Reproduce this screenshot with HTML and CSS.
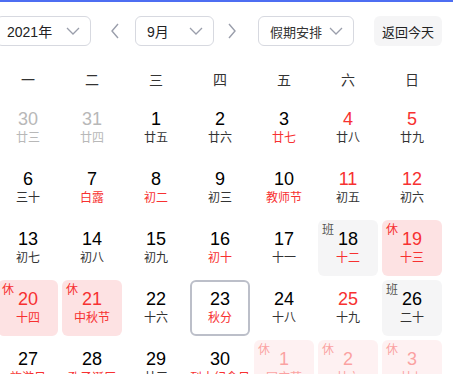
FILE: index.html
```html
<!DOCTYPE html>
<html lang="zh-CN">
<head>
    <meta charset="UTF-8">
    <title>日历</title>
    <link rel="stylesheet" href="styles.css">
</head>
<body>
    <div class="topbar"></div>

    <!-- toolbar -->
    <div class="toolbar">
        <div class="select select-year">
            <span>2021年</span>
            <svg class="chev" width="14" height="8" viewBox="0 0 14 8"><path d="M1 1l6 6 6-6" fill="none" stroke="#9a9eab" stroke-width="1.3"/></svg>
        </div>
        <svg class="arrow arrow-prev" width="10" height="16" viewBox="0 0 10 16"><path d="M8 1L2 8l6 7" fill="none" stroke="#9a9eab" stroke-width="1.4"/></svg>
        <div class="select select-month">
            <span>9月</span>
            <svg class="chev" width="14" height="8" viewBox="0 0 14 8"><path d="M1 1l6 6 6-6" fill="none" stroke="#9a9eab" stroke-width="1.3"/></svg>
        </div>
        <svg class="arrow arrow-next" width="10" height="16" viewBox="0 0 10 16"><path d="M2 1l6 7-6 7" fill="none" stroke="#9a9eab" stroke-width="1.4"/></svg>
        <div class="select select-holiday">
            <span>假期安排</span>
            <svg class="chev" width="14" height="8" viewBox="0 0 14 8"><path d="M1 1l6 6 6-6" fill="none" stroke="#9a9eab" stroke-width="1.3"/></svg>
        </div>
        <button class="today-btn">返回今天</button>
    </div>

    <!-- week names -->
    <div class="weekdays">
        <div>一</div><div>二</div><div>三</div><div>四</div><div>五</div><div>六</div><div>日</div>
    </div>

    <!-- days -->
    <div class="days">
        <div class="day other"><div class="num">30</div><div class="lunar">廿三</div></div>
        <div class="day other"><div class="num">31</div><div class="lunar">廿四</div></div>
        <div class="day"><div class="num">1</div><div class="lunar">廿五</div></div>
        <div class="day"><div class="num">2</div><div class="lunar">廿六</div></div>
        <div class="day"><div class="num">3</div><div class="lunar red">廿七</div></div>
        <div class="day weekend"><div class="num">4</div><div class="lunar">廿八</div></div>
        <div class="day weekend"><div class="num">5</div><div class="lunar">廿九</div></div>

        <div class="day"><div class="num">6</div><div class="lunar">三十</div></div>
        <div class="day"><div class="num">7</div><div class="lunar red">白露</div></div>
        <div class="day"><div class="num">8</div><div class="lunar red">初二</div></div>
        <div class="day"><div class="num">9</div><div class="lunar">初三</div></div>
        <div class="day"><div class="num">10</div><div class="lunar red">教师节</div></div>
        <div class="day weekend"><div class="num">11</div><div class="lunar">初五</div></div>
        <div class="day weekend"><div class="num">12</div><div class="lunar">初六</div></div>

        <div class="day"><div class="num">13</div><div class="lunar">初七</div></div>
        <div class="day"><div class="num">14</div><div class="lunar">初八</div></div>
        <div class="day"><div class="num">15</div><div class="lunar">初九</div></div>
        <div class="day"><div class="num">16</div><div class="lunar red">初十</div></div>
        <div class="day"><div class="num">17</div><div class="lunar">十一</div></div>
        <div class="day work"><span class="tag">班</span><div class="num">18</div><div class="lunar red">十二</div></div>
        <div class="day rest"><span class="tag">休</span><div class="num">19</div><div class="lunar">十三</div></div>

        <div class="day rest"><span class="tag">休</span><div class="num">20</div><div class="lunar">十四</div></div>
        <div class="day rest"><span class="tag">休</span><div class="num">21</div><div class="lunar">中秋节</div></div>
        <div class="day"><div class="num">22</div><div class="lunar">十六</div></div>
        <div class="day today"><div class="num">23</div><div class="lunar red">秋分</div></div>
        <div class="day"><div class="num">24</div><div class="lunar">十八</div></div>
        <div class="day weekend"><div class="num">25</div><div class="lunar">十九</div></div>
        <div class="day work"><span class="tag">班</span><div class="num">26</div><div class="lunar">二十</div></div>

        <div class="day"><div class="num">27</div><div class="lunar red">旅游日</div></div>
        <div class="day"><div class="num">28</div><div class="lunar red">孔子诞辰</div></div>
        <div class="day"><div class="num">29</div><div class="lunar">廿三</div></div>
        <div class="day"><div class="num">30</div><div class="lunar red">烈士纪念日</div></div>
        <div class="day rest next"><span class="tag">休</span><div class="num">1</div><div class="lunar">国庆节</div></div>
        <div class="day rest next"><span class="tag">休</span><div class="num">2</div><div class="lunar">廿六</div></div>
        <div class="day rest next"><span class="tag">休</span><div class="num">3</div><div class="lunar">廿七</div></div>
    </div>
</body>
</html>
```

FILE: styles.css
```css
body {
  margin: 0;
  font-family: "Liberation Sans", "Noto Sans CJK SC", sans-serif;
  color: #000;
  background: #fff;
  overflow: hidden;
}

.topbar {
  height: 2px;
  background-color: #4e6ef2;
}

.toolbar {
  display: flex;
  align-items: center;
  height: 30px;
  margin-top: 14px;
  margin-left: -4px;
}

.select {
  box-sizing: border-box;
  flex-shrink: 0;
  height: 30px;
  display: flex;
  align-items: center;
  justify-content: space-between;
  padding: 0 10px 0 11px;
  border: 1px solid #d7d9e0;
  border-radius: 6px;
  font-size: 14px;
  color: #222;
}

.select-year {
  width: 95px;
  padding-left: 10px;
}

.select-month {
  width: 79px;
}

.select-holiday {
  width: 96px;
  font-size: 13px;
  color: #333;
}

.arrow {
  flex-shrink: 0;
}

.arrow-prev {
  margin: 0 15px 0 19px;
}

.arrow-next {
  margin: 0 21px 0 13px;
}

.today-btn {
  flex-shrink: 0;
  margin-left: 20px;
  height: 30px;
  width: 68px;
  padding: 0;
  border: none;
  border-radius: 6px;
  background-color: #f5f5f6;
  font-family: inherit;
  font-size: 13px;
  color: #222;
}

.weekdays {
  display: grid;
  grid-template-columns: repeat(7, 60px);
  column-gap: 4px;
  margin-left: -2px;
  margin-top: 24px;
  margin-bottom: 10px;
  line-height: 20px;
  font-size: 14px;
  color: #333;
  text-align: center;
}

.days {
  display: grid;
  grid-template-columns: repeat(7, 60px);
  grid-auto-rows: 56px;
  gap: 4px;
  margin-left: -2px;
}

.day {
  position: relative;
  box-sizing: border-box;
  padding-top: 9px;
  border-radius: 6px;
  text-align: center;
}

.num {
  font-size: 18px;
  line-height: 20px;
}

.lunar {
  margin-top: 1px;
  font-size: 12px;
  line-height: 16px;
  color: #333;
  white-space: nowrap;
}

.red {
  color: #f73131;
}

.weekend .num {
  color: #f73131;
}

.other .num,
.other .lunar {
  color: #b8b8b8;
}

.tag {
  position: absolute;
  left: 4px;
  top: 2px;
  font-size: 12px;
  line-height: 16px;
}

.work {
  background-color: #f5f5f6;
}

.work .tag {
  color: #555;
}

.rest {
  background-color: #fde2e3;
}

.rest .num,
.rest .lunar,
.rest .tag {
  color: #f73131;
}

.next {
  opacity: 0.45;
}

.today {
  border: 2px solid #bcbfc9;
  padding-top: 7px;
}
```
